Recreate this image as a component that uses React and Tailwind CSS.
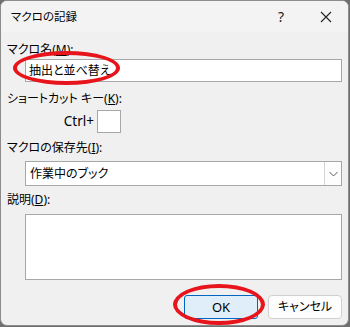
export default function App() {
  const font = "font-['Noto_Sans','Noto_Sans_CJK_JP',sans-serif] [font-feature-settings:'palt']";

  return (
    <div className={`w-[350px] h-[327px] bg-[#6f6f6f] ${font} text-[12px] text-black`}>
      <div className="relative w-[349px] h-[326px] bg-[#f0f0f0] border border-[#8c8c8c] rounded-[7px] overflow-hidden">
        {/* title bar */}
        <div className="h-[31px] bg-[#f3f3f3] flex items-center pl-[10px]">
          <span className="leading-none text-[11.5px]">マクロの記録</span>
          <span className="ml-auto w-[14px] text-center text-[14px] leading-none text-[#222] mr-[32px]">?</span>
          <svg width="12" height="12" viewBox="0 0 12 12" className="mr-[16px]">
            <path d="M1 1 L11 11 M11 1 L1 11" stroke="#222" strokeWidth="1.1" />
          </svg>
        </div>

        {/* body */}
        <div className="pl-[6px] flex flex-col">
          <div className="mt-[10px] h-[16px] leading-[16px]">
            マクロ名(<span className="underline">M</span>):
          </div>
          <div className="mt-[1px] ml-[18px] w-[317px] h-[23px] bg-white border border-[#a7a7a7] flex items-center pl-[3px] leading-none">
            抽出と並べ替え
          </div>

          <div className="mt-[9px] h-[16px] leading-[16px]">
            ショートカット キー(<span className="underline">K</span>):
          </div>
          <div className="mt-[3px] flex items-center">
            <span className="w-[90px] text-right pr-[3px] leading-none text-[13.5px]">Ctrl+</span>
            <div className="w-[24px] h-[23px] bg-white border border-[#a7a7a7]" />
          </div>

          <div className="mt-[7px] h-[16px] leading-[16px]">
            マクロの保存先(<span className="underline">I</span>):
          </div>
          <div className="mt-[5px] ml-[18px] w-[317px] h-[25px] bg-white border border-[#a7a7a7] flex items-center pl-[4px] leading-none">
            <span>作業中のブック</span>
            <div className="ml-auto w-[17px] h-[23px] bg-[#fdfdfd] border-l border-[#d6d6d6] flex items-center justify-center">
              <svg width="9" height="6" viewBox="0 0 9 6">
                <path d="M0.5 1 L4.5 5 L8.5 1" fill="none" stroke="#5a5a5a" strokeWidth="1" />
              </svg>
            </div>
          </div>

          <div className="mt-[6px] h-[16px] leading-[16px]">
            説明(<span className="underline">D</span>):
          </div>
          <div className="mt-[6px] ml-[18px] w-[317px] h-[66px] bg-white border border-[#a7a7a7]" />

          <div className="mt-[15px] flex justify-end gap-[10px] pr-[6px]">
            <button className="w-[74px] h-[24px] bg-[#e0eef9] border border-[#0067c0] rounded-[3px] flex items-center justify-center leading-none text-[13px]">
              OK
            </button>
            <button className="w-[74px] h-[24px] bg-[#fdfdfd] border border-[#d0d0d0] rounded-[4px] flex items-center justify-center leading-none">
              キャンセル
            </button>
          </div>
        </div>

        {/* red annotation ellipses */}
        <div className="absolute left-[12px] top-[50px] w-[107px] h-[34px] rounded-[50%] border-[4px] border-[#e8141c]" />
        <div className="absolute left-[172px] top-[283px] w-[92px] h-[41px] rounded-[50%] border-[4px] border-[#e8141c]" />
      </div>
    </div>
  );
}
